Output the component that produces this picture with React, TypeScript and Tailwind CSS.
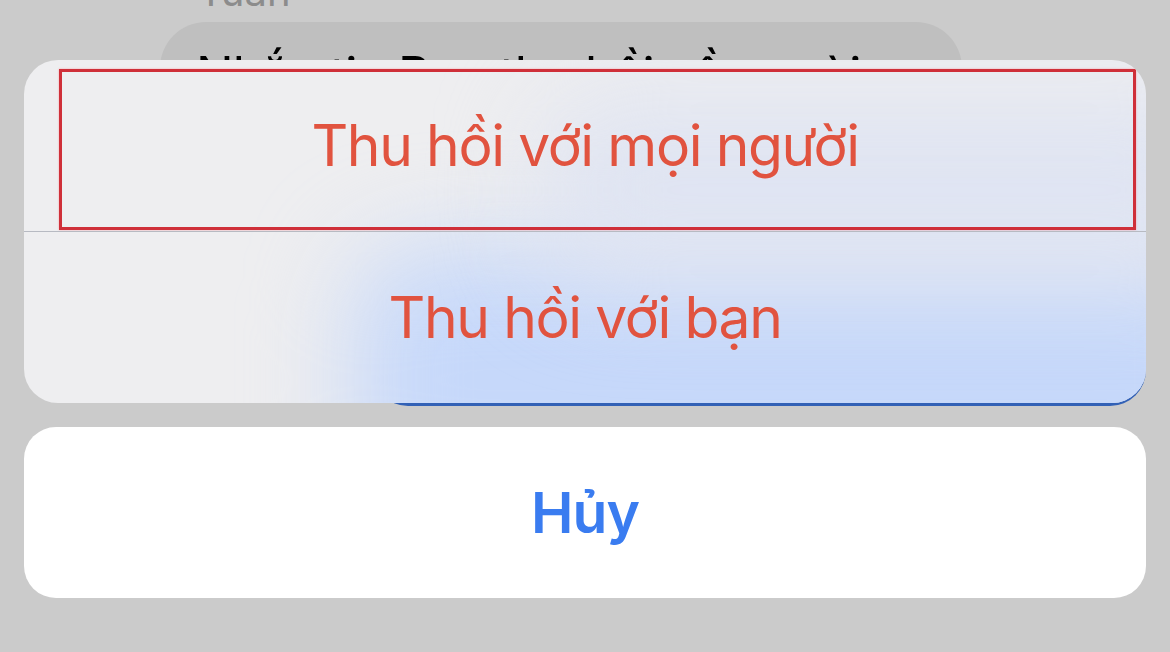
import React from "react";

const font = { fontFamily: 'Inter, "Noto Sans", "Liberation Sans", sans-serif' };

function ChatBackdrop() {
  return (
    <div className="flex flex-col">
      {/* Date label, scrolled mostly out of view */}
      <p className="-mt-[32px] ml-[198px] text-[40px] leading-[48px] text-[#8c8c8c]">
        Tuần
      </p>

      {/* Received message bubble */}
      <div className="ml-[160px] mt-[6px] h-[300px] w-[802px] overflow-hidden rounded-[46px] bg-[#bfbfbf] px-[36px] pt-[21px]">
        <p className="whitespace-nowrap text-[50px] leading-[64px] tracking-[-1px] text-black">
          Nhắn tin Ben thu hồi về người
        </p>
      </div>

      {/* Sent message bubble peeking out under the sheet */}
      <div className="-mt-[86px] ml-[372px] h-[170px] w-[774px] rounded-[36px] bg-[#3261b6]" />
    </div>
  );
}

function ActionSheet() {
  return (
    <div className="absolute inset-0 flex flex-col gap-[24px] px-[24px] pt-[60px]">
      <div className="relative flex h-[343px] flex-col overflow-hidden rounded-[34px] bg-[#eeeef0]">
        {/* Blurred tint of the blue bubble behind the sheet */}
        <div className="absolute left-[330px] top-[190px] h-[260px] w-[900px] rounded-[60px] bg-[#c6d8fa] blur-[50px]" />
        <div className="absolute left-[520px] top-[40px] h-[180px] w-[700px] rounded-[60px] bg-[#dfe4f2] blur-[50px]" />

        <button className="relative flex h-[171px] items-center justify-center text-[57px] tracking-[-1.4px] text-[#e1533f]">
          Thu hồi với mọi người
          <span className="absolute left-[35px] top-[9px] h-[161px] w-[1077px] border-[3px] border-[#cf2f39] shadow-[0_0_2px_#f5a5aa]" />
        </button>
        <div className="relative h-px bg-[#b7bac2]" />
        <button className="relative flex h-[171px] items-center justify-center text-[57px] tracking-[-1.4px] text-[#e1533f]">
          Thu hồi với bạn
        </button>
      </div>

      <button className="flex h-[171px] items-center justify-center rounded-[32px] bg-white text-[57px] font-semibold tracking-[-1px] text-[#3a7cf0]">
        Hủy
      </button>
    </div>
  );
}

export default function App() {
  return (
    <div
      className="relative h-[652px] w-[1170px] overflow-hidden bg-[#cbcbcb]"
      style={font}
    >
      <ChatBackdrop />
      <ActionSheet />
    </div>
  );
}
